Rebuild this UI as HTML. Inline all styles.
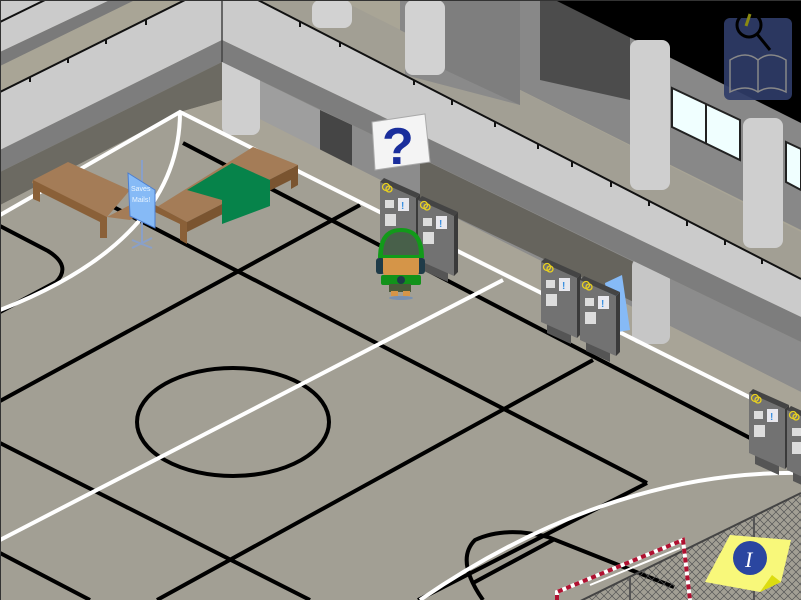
<!DOCTYPE html>
<html><head><meta charset="utf-8"><style>
html,body{margin:0;padding:0;background:#a29f94;}
svg{display:block}
</style></head><body>
<svg width="801" height="600" viewBox="0 0 801 600" xmlns="http://www.w3.org/2000/svg">
<defs>
<pattern id="mesh" width="8" height="8" patternUnits="userSpaceOnUse">
<path d="M0 0L8 8M8 0L0 8" stroke="#555" stroke-width="0.7"/>
</pattern>
<g id="cab">
<polygon points="6,58 30,69 30,82 6,71" fill="#555"/>
<polygon points="0,0 36,16 36,76 0,60" fill="#727272"/>
<polygon points="0,0 4,-4 40,12 36,16" fill="#444"/>
<polygon points="36,16 40,12 40,72 36,76" fill="#3a3a3a"/>
<rect x="5" y="18" width="9" height="8" fill="#ddd"/>
<rect x="18" y="16" width="11" height="13" fill="#e8e8ee"/>
<text x="21" y="27" font-family="Liberation Sans,sans-serif" font-size="10" fill="#3a8fe0" font-weight="bold">!</text>
<rect x="5" y="32" width="11" height="12" fill="#ddd"/>
<circle cx="6" cy="5" r="3.5" fill="none" stroke="#e8d020" stroke-width="1.3"/>
<circle cx="9" cy="7" r="3" fill="none" stroke="#e8d020" stroke-width="1.3"/>
</g>
</defs>
<rect width="801" height="600" fill="#a29f94"/>

<!-- upper-right back area -->
<polygon points="222,0 801,0 801,232 222,-60" fill="#a9a596"/>
<polygon points="400,0 801,0 801,230 400,30" fill="#888"/>
<polygon points="405,0 520,0 520,105 405,75" fill="#8a8a8a"/>
<polygon points="440,0 520,0 520,105 445,70" fill="#7e7e7e"/>
<polygon points="540,0 630,0 630,100 540,80" fill="#4c4c4c"/>
<polygon points="555,0 801,0 801,123" fill="#000"/>
<rect x="630" y="40" width="40" height="150" rx="8" fill="#cfcfcf"/>
<rect x="743" y="118" width="40" height="130" rx="8" fill="#cfcfcf"/>
<rect x="405" y="0" width="40" height="75" rx="8" fill="#d2d2d2"/>
<rect x="312" y="0" width="40" height="28" rx="8" fill="#d2d2d2"/>
<polygon points="672,88 740,120 740,160 672,127" fill="#f0ffff" stroke="#222" stroke-width="2"/>
<line x1="706" y1="104" x2="706" y2="143" stroke="#222" stroke-width="2"/>
<polygon points="786,142 801,149 801,190 786,182" fill="#f0ffff" stroke="#222" stroke-width="2"/>

<!-- top-left upper structure -->
<polygon points="0,0 222,0 222,0 0,110" fill="#a9a596"/>
<polygon points="0,0 110,0 0,52" fill="#cbcbcb"/>
<polygon points="0,52 110,0 135,0 0,66" fill="#7a7a7a"/>
<line x1="0" y1="22" x2="45" y2="0" stroke="#111" stroke-width="2"/>

<!-- left walkway -->
<polygon points="0,92 185,0 222,0 222,40 0,150" fill="#cbcbcb"/>
<line x1="0" y1="92" x2="185" y2="0" stroke="#111" stroke-width="2"/>
<polygon points="0,150 222,40 222,62 0,172" fill="#7d7d7d"/>
<polygon points="0,172 222,62 222,100 180,112 0,205" fill="#6c6a62"/>

<!-- right under walkway -->
<polygon points="222,62 801,342 801,392 222,100" fill="#8c8c8c"/>
<polygon points="222,62 320,110 320,150 222,100" fill="#9e9e9e"/>
<polygon points="320,110 352,125 352,166 320,150" fill="#454545"/>
<polygon points="420,158 640,265 640,305 420,200" fill="#66645d"/>
<polygon points="222,100 801,392 801,423 180,112" fill="#a8a497"/>
<rect x="222" y="50" width="38" height="85" rx="8" fill="#cfcfcf"/>
<rect x="632" y="258" width="38" height="86" rx="8" fill="#c6c6c6"/>

<!-- right walkway -->
<polygon points="222,0 260,0 801,278 801,317 222,40" fill="#cbcbcb"/>
<polygon points="222,40 801,317 801,342 222,62" fill="#7d7d7d"/>
<line x1="222" y1="0" x2="222" y2="62" stroke="#444" stroke-width="1.5"/>
<line x1="258" y1="0" x2="801" y2="279" stroke="#111" stroke-width="2"/>
<g stroke="#111" stroke-width="2">
<line x1="300" y1="22" x2="300" y2="27"/><line x1="340" y1="42" x2="340" y2="47"/><line x1="414" y1="80" x2="414" y2="85"/><line x1="452" y1="100" x2="452" y2="105"/><line x1="495" y1="122" x2="495" y2="127"/><line x1="538" y1="144" x2="538" y2="149"/><line x1="572" y1="162" x2="572" y2="167"/><line x1="611" y1="182" x2="611" y2="187"/><line x1="649" y1="201" x2="649" y2="206"/><line x1="687" y1="221" x2="687" y2="226"/><line x1="725" y1="240" x2="725" y2="245"/><line x1="762" y1="259" x2="762" y2="264"/>
<line x1="30" y1="77" x2="30" y2="82"/><line x1="68" y1="58" x2="68" y2="63"/><line x1="106" y1="39" x2="106" y2="44"/><line x1="146" y1="20" x2="146" y2="25"/>
</g>

<!-- court lines -->
<g fill="none" stroke="#000" stroke-width="4">
<line x1="183" y1="143" x2="750" y2="438"/>
<line x1="100" y1="200" x2="647" y2="483"/>
<line x1="0" y1="443" x2="310" y2="600"/>
<line x1="0" y1="553" x2="90" y2="600"/>
<line x1="0" y1="401" x2="360" y2="205"/>
<line x1="157" y1="600" x2="593" y2="360"/>
<line x1="418" y1="600" x2="647" y2="483"/>
<ellipse cx="233" cy="422" rx="96" ry="54"/>
<path d="M0,226 L48,251 Q72,266 56,282 L0,312"/>
<path d="M674,587 L548,537 Q505,526 475,540 Q455,560 483,600"/>
<line x1="473" y1="583" x2="553" y2="540"/>
</g>
<g fill="none" stroke="#fff" stroke-width="4">
<polyline points="0,215 180,112 801,423"/>
<path d="M180,112 Q180,240 0,310"/>
<line x1="0" y1="540" x2="503" y2="280"/>
<path d="M801,473 Q610,470 420,600"/>
</g>

<!-- fence -->
<polygon points="560,610 801,493 801,600 560,600" fill="url(#mesh)"/>
<line x1="560" y1="611" x2="801" y2="493" stroke="#444" stroke-width="2"/>
<g stroke="#555" stroke-width="2"><line x1="630" y1="577" x2="630" y2="600"/><line x1="754" y1="516" x2="754" y2="600"/></g>
<g fill="none" stroke-width="4">
<path d="M557,600 L557,592 L683,540 L690,600" stroke="#fff"/>
<path d="M557,600 L557,592 L683,540 L690,600" stroke="#b01030" stroke-dasharray="5 4"/>
<path d="M590,585 L680,548" stroke="#fff" stroke-width="2"/>
</g>
<polygon points="730,535 791,540 781,582 760,592 705,582" fill="#f8f87a"/>
<polygon points="760,592 781,582 772,575" fill="#dcdc10"/>
<circle cx="750" cy="558" r="17" fill="#2a46a0"/>
<text x="745" y="567" font-family="Liberation Serif,serif" font-style="italic" font-size="22" fill="#fff">I</text>

<!-- benches -->
<polygon points="33,180 68,162 130,190 107,217 32,183" fill="#a47c57"/>
<polygon points="33,180 107,217 107,238 100,238 100,222 40,192 40,202 33,199" fill="#8a6038"/>
<polygon points="107,217 130,205 157,207 253,147 298,165 187,222 155,205 130,220" fill="#a47c57"/>
<polygon points="155,205 187,222 187,244 180,240 180,224 155,212" fill="#8a6038"/>
<polygon points="187,222 298,165 298,185 291,189 291,180 187,232" fill="#7a5430"/>
<polygon points="187,190 232,163 270,180 270,206 222,224 222,200" fill="#06834a"/>

<g stroke="#8aa0c8" stroke-width="2" fill="none"><line x1="142" y1="160" x2="142" y2="245"/><line x1="132" y1="240" x2="152" y2="248"/><line x1="132" y1="248" x2="152" y2="238"/></g>
<polygon points="128,173 155,190 155,228 130,216" fill="#86baf6" stroke="#4c7ed0" stroke-width="1"/>
<text x="131" y="191" font-family="Liberation Sans,sans-serif" font-size="7" fill="#e8f4ff">Saves</text>
<text x="132" y="202" font-family="Liberation Sans,sans-serif" font-size="7" fill="#e8f4ff">Mails!</text>

<use href="#cab" x="380" y="182"/>
<use href="#cab" x="418" y="200"/>
<use href="#cab" x="541" y="262"/>
<polygon points="605,283 622,275 630,330 612,333" fill="#86baf6"/>
<use href="#cab" x="580" y="280"/>
<use href="#cab" x="749" y="393"/>
<use href="#cab" x="787" y="410"/>

<!-- character -->
<ellipse cx="401" cy="298" rx="12" ry="2" fill="#7890b0"/>
<rect x="376" y="258" width="9" height="16" rx="3" fill="#1f3b48"/>
<rect x="416" y="258" width="9" height="16" rx="3" fill="#1f3b48"/>
<rect x="383" y="254" width="36" height="22" rx="4" fill="#d59548"/>
<path d="M378,258 Q378,228 401,228 Q424,228 424,258 Z" fill="#129a1a"/>
<path d="M383,255 Q383,232 401,232 Q419,232 419,255 Z" fill="#48604a"/>
<rect x="381" y="275" width="40" height="10" rx="2" fill="#12921a"/>
<rect x="389" y="284" width="22" height="8" fill="#4a5a3a"/>
<rect x="391" y="291" width="7" height="5" fill="#d59548"/><rect x="403" y="291" width="7" height="5" fill="#d59548"/>
<circle cx="401" cy="280" r="4" fill="#1f3b48"/>

<polygon points="372,122 425,114 430,162 375,170" fill="#f4f4f4" stroke="#aaa" stroke-width="1"/>
<text x="382" y="164" font-family="Liberation Sans,sans-serif" font-weight="bold" font-size="52" fill="#1a2e9c">?</text>

<rect x="724" y="18" width="68" height="82" rx="6" fill="#2f3c68" opacity="0.92"/>
<path d="M730,92 L730,60 Q746,50 758,60 Q770,50 786,60 L786,92 Q770,84 758,92 Q746,84 730,92 Z M758,60 L758,92" fill="none" stroke="#888" stroke-width="1.5"/>
<circle cx="749" cy="25" r="12" fill="none" stroke="#000" stroke-width="3"/>
<line x1="757" y1="34" x2="770" y2="50" stroke="#000" stroke-width="3"/>
<line x1="750" y1="14" x2="746" y2="26" stroke="#8a8a10" stroke-width="3"/>
<rect x="0" y="0" width="801" height="1" fill="#333"/>
<rect x="0" y="0" width="1" height="600" fill="#333"/>
</svg>
</body></html>
